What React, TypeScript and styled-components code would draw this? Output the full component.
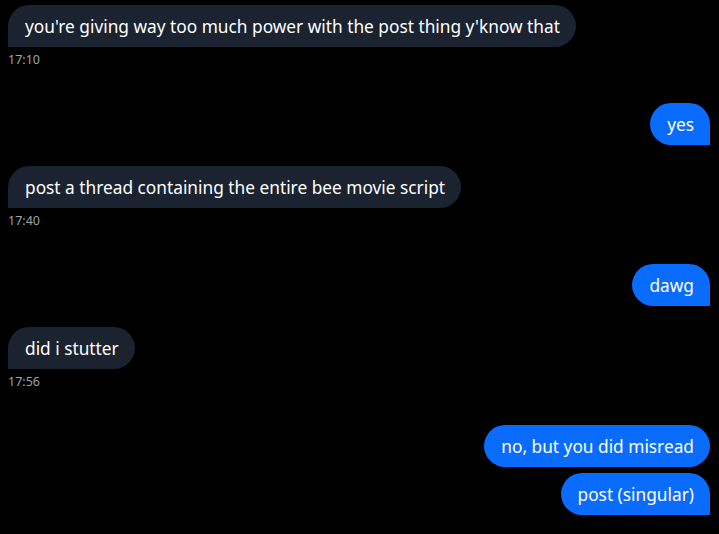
import React from 'react';
import styled, { createGlobalStyle } from 'styled-components';

type Message = {
  id: number;
  text: string;
  mine: boolean;
  time?: string;
};

const MESSAGES: Message[] = [
  { id: 1, text: "you're giving way too much power with the post thing y'know that", mine: false, time: '17:10' },
  { id: 2, text: 'yes', mine: true },
  { id: 3, text: 'post a thread containing the entire bee movie script', mine: false, time: '17:40' },
  { id: 4, text: 'dawg', mine: true },
  { id: 5, text: 'did i stutter', mine: false, time: '17:56' },
  { id: 6, text: 'no, but you did misread', mine: true },
  { id: 7, text: 'post (singular)', mine: true },
];

const GlobalStyle = createGlobalStyle`
  html, body {
    margin: 0;
    padding: 0;
    background: #000000;
  }
  body {
    font-family: 'Noto Sans', 'Open Sans', sans-serif;
  }
`;

export default function App() {
  return (
    <>
      <GlobalStyle />
      <Thread>
        {MESSAGES.map((msg, i) => {
          const next = MESSAGES[i + 1];
          const lastOfRun = !next || next.mine !== msg.mine;
          let gap = 0;
          if (next) {
            if (next.mine === msg.mine) gap = 6;
            else gap = msg.mine ? 21 : 35;
          }
          return (
            <Row key={msg.id} $mine={msg.mine} $gap={gap}>
              <Bubble $mine={msg.mine} $tail={lastOfRun}>
                {msg.text}
              </Bubble>
              {msg.time && <Time>{msg.time}</Time>}
            </Row>
          );
        })}
      </Thread>
    </>
  );
}

const Thread = styled.div`
  display: flex;
  flex-direction: column;
  width: 719px;
  height: 534px;
  box-sizing: border-box;
  padding: 5px 9px 0 8px;
  background: #000000;
  overflow: hidden;
`;

const Row = styled.div<{ $mine: boolean; $gap: number }>`
  display: flex;
  flex-direction: column;
  align-items: ${(p) => (p.$mine ? 'flex-end' : 'flex-start')};
  margin-bottom: ${(p) => p.$gap}px;
`;

const Bubble = styled.div<{ $mine: boolean; $tail: boolean }>`
  box-sizing: border-box;
  height: 42px;
  padding: 11px 16px 9px 17px;
  font-size: 17.3px;
  line-height: 22px;
  color: #ffffff;
  white-space: nowrap;
  border-radius: 21px;
  background: ${(p) => (p.$mine ? '#0a6cff' : '#1b2230')};
  ${(p) =>
    p.$tail &&
    (p.$mine ? 'border-bottom-right-radius: 0;' : 'border-bottom-left-radius: 0;')}
`;

const Time = styled.div`
  margin-top: 5px;
  font-size: 12.5px;
  line-height: 16px;
  color: #9ba3ad;
`;
